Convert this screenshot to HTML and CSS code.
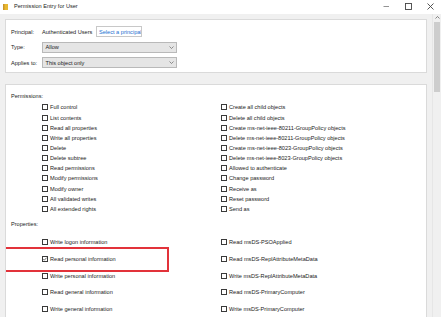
FILE: index.html
```html
<!DOCTYPE html>
<html>
<head>
<meta charset="utf-8">
<link rel="stylesheet" href="styles.css">
</head>
<body>
<div class="window">
  <div class="titlebar">
    <svg class="app-icon" width="5" height="6" viewBox="0 0 5 6"><rect x="0" y="0" width="5" height="6" fill="#e8b830"/><rect x="0" y="0" width="1.5" height="6" fill="#c9952a"/></svg>
    <span class="title">Permission Entry for User</span>
    <div class="controls">
      <span class="ctl"><svg width="7" height="7" viewBox="0 0 7 7"><line x1="0.5" y1="3.5" x2="6" y2="3.5" stroke="#777" stroke-width="0.8"/></svg></span>
      <span class="ctl"><svg width="7" height="7" viewBox="0 0 7 7"><rect x="0.5" y="0.5" width="6" height="6" fill="none" stroke="#444" stroke-width="0.9"/></svg></span>
      <span class="ctl"><svg width="7" height="7" viewBox="0 0 7 7"><path d="M0.5 0.5 L6.5 6.5 M6.5 0.5 L0.5 6.5" stroke="#444" stroke-width="0.9"/></svg></span>
    </div>
  </div>
  <div class="body">
    <div class="main">
      <section class="panel header-panel">
        <div class="field-row">
          <span class="label">Principal:</span>
          <span class="value">Authenticated Users</span>
          <span class="link-btn">Select a principal</span>
        </div>
        <div class="field-row">
          <span class="label">Type:</span>
          <span class="combo">Allow<svg class="chev" width="5" height="3" viewBox="0 0 5 3"><polyline points="0.5,0.5 2.5,2.5 4.5,0.5" fill="none" stroke="#666" stroke-width="0.7"/></svg></span>
        </div>
        <div class="field-row">
          <span class="label">Applies to:</span>
          <span class="combo">This object only<svg class="chev" width="5" height="3" viewBox="0 0 5 3"><polyline points="0.5,0.5 2.5,2.5 4.5,0.5" fill="none" stroke="#666" stroke-width="0.7"/></svg></span>
        </div>
      </section>

      <section class="panel perms-panel">
        <div class="section-label">Permissions:</div>
        <div class="perm-grid">
          <ul class="col">
            <li class="item"><span class="box"></span>Full control</li>
            <li class="item"><span class="box"></span>List contents</li>
            <li class="item"><span class="box"></span>Read all properties</li>
            <li class="item"><span class="box"></span>Write all properties</li>
            <li class="item"><span class="box"></span>Delete</li>
            <li class="item"><span class="box"></span>Delete subtree</li>
            <li class="item"><span class="box"></span>Read permissions</li>
            <li class="item"><span class="box"></span>Modify permissions</li>
            <li class="item"><span class="box"></span>Modify owner</li>
            <li class="item"><span class="box"></span>All validated writes</li>
            <li class="item"><span class="box"></span>All extended rights</li>
          </ul>
          <ul class="col">
            <li class="item"><span class="box"></span>Create all child objects</li>
            <li class="item"><span class="box"></span>Delete all child objects</li>
            <li class="item"><span class="box"></span>Create ms-net-ieee-80211-GroupPolicy objects</li>
            <li class="item"><span class="box"></span>Delete ms-net-ieee-80211-GroupPolicy objects</li>
            <li class="item"><span class="box"></span>Create ms-net-ieee-8023-GroupPolicy objects</li>
            <li class="item"><span class="box"></span>Delete ms-net-ieee-8023-GroupPolicy objects</li>
            <li class="item"><span class="box"></span>Allowed to authenticate</li>
            <li class="item"><span class="box"></span>Change password</li>
            <li class="item"><span class="box"></span>Receive as</li>
            <li class="item"><span class="box"></span>Reset password</li>
            <li class="item"><span class="box"></span>Send as</li>
          </ul>
        </div>
        <div class="section-label props-label">Properties:</div>
        <div class="prop-grid">
          <div class="prop"><span class="box"></span>Write logon information</div>
          <div class="prop"><span class="box"></span>Read msDS-PSOApplied</div>
          <div class="prop highlight"><span class="box checked"><svg width="4" height="4" viewBox="0 0 4 4"><polyline points="0.3,2 1.4,3.2 3.7,0.6" fill="none" stroke="#333" stroke-width="0.7"/></svg></span>Read personal information</div>
          <div class="prop"><span class="box"></span>Read msDS-ReplAttributeMetaData</div>
          <div class="prop"><span class="box"></span>Write personal information</div>
          <div class="prop"><span class="box"></span>Write msDS-ReplAttributeMetaData</div>
          <div class="prop"><span class="box"></span>Read general information</div>
          <div class="prop"><span class="box"></span>Read msDS-PrimaryComputer</div>
          <div class="prop"><span class="box"></span>Write general information</div>
          <div class="prop"><span class="box"></span>Write msDS-PrimaryComputer</div>
        </div>
      </section>
    </div>
    <div class="scrollbar">
      <svg class="up" width="5" height="3" viewBox="0 0 5 3"><polyline points="0.5,2.5 2.5,0.5 4.5,2.5" fill="none" stroke="#555" stroke-width="0.7"/></svg>
      <div class="thumb"></div>
    </div>
  </div>
</div>
</body>
</html>
```

FILE: styles.css
```css
* { box-sizing: border-box; }
html, body {
  margin: 0;
  padding: 0;
  width: 441px;
  height: 317px;
  overflow: hidden;
  background: #f0f0f0;
  font-family: "Liberation Sans", "DejaVu Sans", sans-serif;
  font-size: 5.6px;
  color: #1b1b1b;
  white-space: nowrap;
}
.window {
  width: 441px;
  height: 317px;
  display: flex;
  flex-direction: column;
}
.titlebar {
  height: 14px;
  background: #fff;
  display: flex;
  align-items: center;
  flex: none;
}
.app-icon {
  margin-left: 3px;
  margin-top: -1px;
}
.title {
  margin-left: 6px;
  font-size: 5.6px;
  margin-top: -2px;
}
.controls {
  margin-left: auto;
  display: flex;
  height: 14px;
}
.ctl {
  width: 22px;
  display: flex;
  align-items: center;
  justify-content: center;
  margin-top: -2px;
}
.body {
  flex: 1;
  display: flex;
  min-height: 0;
}
.main {
  width: 432px;
  padding-left: 5px;
  padding-right: 5px;
  display: flex;
  flex-direction: column;
  min-height: 0;
}
.panel {
  background: #fff;
  border: 1px solid #dadada;
}
.header-panel {
  margin-top: 5px;
  height: 54px;
  flex: none;
  padding: 6px 0 0 5px;
  display: flex;
  flex-direction: column;
  gap: 4.5px;
}
.field-row {
  display: flex;
  align-items: center;
  height: 11px;
}
.label {
  width: 31px;
  flex: none;
}
.value {
  width: 55px;
  flex: none;
}
.link-btn {
  height: 11px;
  width: 46px;
  flex: none;
  border: 1px solid #c8c8c8;
  color: #1a6fd0;
  display: flex;
  align-items: center;
  padding-left: 2px;
  margin-left: -1px;
  overflow: hidden;
}
.combo {
  width: 135px;
  height: 11px;
  background: #e5e5e5;
  border: 1px solid #b9b9b9;
  display: flex;
  align-items: center;
  padding-left: 2.5px;
}
.chev {
  margin-left: auto;
  margin-right: 2.5px;
}
.perms-panel {
  margin-top: 11px;
  flex: 1;
  min-height: 0;
  overflow: hidden;
  border-bottom: none;
  padding: 6px 0 0 5px;
}
.section-label {
  height: 10px;
  line-height: 10px;
}
.perm-grid {
  display: grid;
  grid-template-columns: 179px 1fr;
  margin-left: 31px;
  margin-top: 1.3px;
}
.col {
  list-style: none;
  margin: 0;
  padding: 0;
}
.item {
  height: 10.17px;
  display: flex;
  align-items: center;
}
.box {
  width: 6px;
  height: 6px;
  border: 1px solid #3a3a3a;
  background: #fff;
  margin-right: 2px;
  flex: none;
  display: flex;
}
.props-label {
  margin-top: 5.3px;
}
.prop-grid {
  display: grid;
  grid-template-columns: 179px 1fr;
  grid-auto-rows: 16.8px;
  margin-left: 31px;
  margin-top: 4.3px;
  padding-left: 2px;
  margin-left: 29px;
}
.prop {
  display: flex;
  align-items: center;
}
.highlight {
  position: relative;
}
.highlight::before {
  content: "";
  position: absolute;
  left: -38px;
  top: -3px;
  width: 161px;
  height: 21px;
  border: 2px solid #e2323a;
}
.scrollbar {
  width: 9px;
  background: #f0f0f0;
  border-left: 1px solid #e6e6e6;
  display: flex;
  flex-direction: column;
  align-items: center;
}
.up {
  margin-top: 2px;
}
.thumb {
  margin-top: 3px;
  width: 6px;
  height: 70px;
  background: #cdcdcd;
}
```
